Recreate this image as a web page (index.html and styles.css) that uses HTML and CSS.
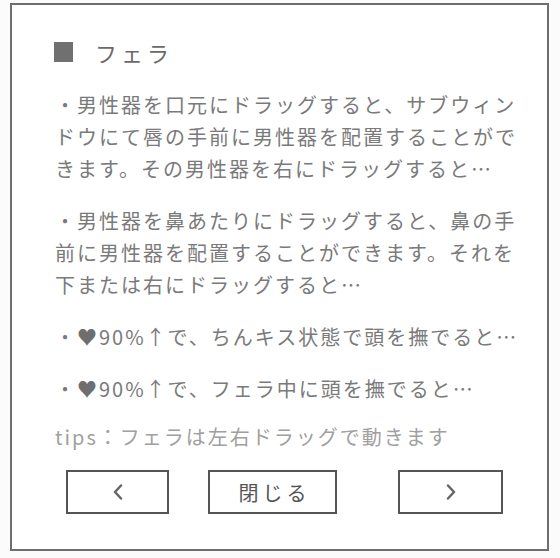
FILE: index.html
```html
<!DOCTYPE html>
<html lang="ja">
<head>
  <meta charset="UTF-8" />
  <meta name="viewport" content="width=device-width, initial-scale=1.0"/>
  <title>フェラ - ヘルプ</title>
  <link rel="stylesheet" href="styles.css">
</head>
<body>
  <div class="help-panel">
    <h1 class="help-title"><span class="title-mark"></span>フェラ</h1>

    <!-- help text, one paragraph per hint -->
    <p class="hint">・男性器を口元にドラッグすると、サブウィンドウにて唇の手前に男性器を配置することができます。その男性器を右にドラッグすると…</p>
    <p class="hint">・男性器を鼻あたりにドラッグすると、鼻の手前に男性器を配置することができます。それを下または右にドラッグすると…</p>
    <p class="hint">・<span class="heart">♥</span>90%↑で、ちんキス状態で頭を撫でると…</p>
    <p class="hint">・<span class="heart">♥</span>90%↑で、フェラ中に頭を撫でると…</p>
    <p class="tips">tips：フェラは左右ドラッグで動きます</p>

    <div class="help-buttons">
      <button class="btn btn-prev" type="button" aria-label="前へ">
        <svg width="12" height="16" viewBox="0 0 12 16"><polyline points="9,1.5 3,8 9,14.5" /></svg>
      </button>
      <button class="btn btn-close" type="button">閉じる</button>
      <button class="btn btn-next" type="button" aria-label="次へ">
        <svg width="12" height="16" viewBox="0 0 12 16"><polyline points="3,1.5 9,8 3,14.5" /></svg>
      </button>
    </div>
  </div>
</body>
</html>
```

FILE: styles.css
```css
/* Reset */
* {
  margin: 0;
  padding: 0;
  box-sizing: border-box;
}

body {
  font-family: "Noto Sans CJK JP", "Noto Sans", sans-serif;
  background: #fbfbfb;
  color: #7a7a7a;
  padding: 3px 0 0 10px;
}

/* Help window */
.help-panel {
  width: 539px;
  height: 548px;
  background: #fff;
  border: 2px solid #6e6e6e;
  padding: 31px 20px 0 43px;
}

.help-title {
  display: flex;
  align-items: center;
  font-size: 22px;
  font-weight: 400;
  line-height: 32px;
  letter-spacing: 4px;
  color: #6a6a6a;
  margin-bottom: 21px;
}
.title-mark {
  width: 19px;
  height: 20px;
  background: #707070;
  margin: 0 22px 0 -1px;
}

/* Hint paragraphs */
.hint {
  width: 466px;
  font-size: 20px;
  line-height: 32px;
  letter-spacing: 2px;
  margin-bottom: 20px;
}
.hint:nth-of-type(4) {
  margin-bottom: 16px;
}
.heart {
  color: #6e6e6e;
}
.tips {
  font-size: 20px;
  line-height: 32px;
  letter-spacing: 2px;
  color: #a0a0a0;
}

/* Bottom buttons */
.help-buttons {
  display: flex;
  margin-top: 17px;
  padding-left: 11px;
}
.btn {
  height: 44px;
  background: #fff;
  border: 2px solid #555;
  display: flex;
  align-items: center;
  justify-content: center;
  font-family: inherit;
  color: #555;
}
.btn-prev { width: 103px; }
.btn-close {
  width: 129px;
  margin-left: 39px;
  font-size: 20px;
  letter-spacing: 4px;
  padding-left: 4px;
}
.btn-next {
  width: 105px;
  margin-left: 61px;
}
.btn svg polyline {
  fill: none;
  stroke: #666;
  stroke-width: 2.5;
  stroke-linecap: round;
  stroke-linejoin: round;
}
```
